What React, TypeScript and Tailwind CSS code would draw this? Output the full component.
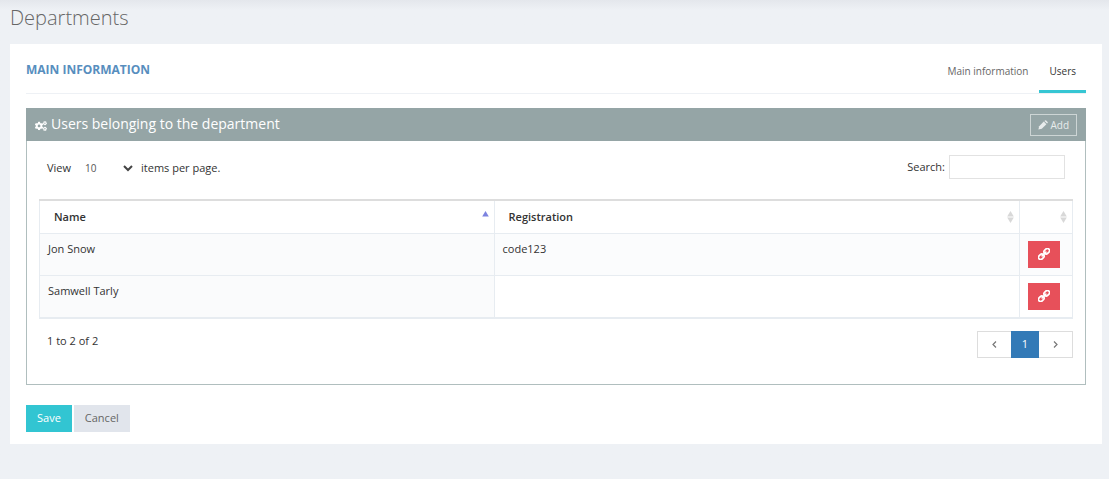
import { useState } from 'react';
import { FaCogs } from 'react-icons/fa';

interface DepartmentUser {
  id: number;
  name: string;
  registration: string;
}

const initialUsers: DepartmentUser[] = [
  { id: 1, name: 'Jon Snow', registration: 'code123' },
  { id: 2, name: 'Samwell Tarly', registration: '' },
];

const tabs = ['Main information', 'Users'];

function SortIcon({ sorted = false }: { sorted?: boolean }) {
  return (
    <svg viewBox="0 0 7 13" className="w-[7px] h-[13px] shrink-0" aria-hidden="true">
      <path d="M3.5 1 L6.8 6.5 H0.2 Z" fill={sorted ? '#7c83e0' : '#d8d8d8'} />
      {!sorted && <path d="M3.5 13 L6.8 7.5 H0.2 Z" fill="#d8d8d8" />}
    </svg>
  );
}

function LinkIcon() {
  return (
    <svg viewBox="0 0 12 12" className="w-3 h-3" fill="none" stroke="currentColor" strokeWidth="1.7" aria-hidden="true">
      <g transform="rotate(-45 6 6)">
        <rect x="-0.9" y="3.8" width="6" height="4.4" rx="2.1" />
        <rect x="6.9" y="3.8" width="6" height="4.4" rx="2.1" />
        <path d="M3.4 6 H8.6" strokeLinecap="round" />
      </g>
    </svg>
  );
}

function PencilIcon() {
  return (
    <svg viewBox="0 0 10 10" className="w-[10px] h-[10px]" fill="currentColor" aria-hidden="true">
      <path d="M0.4 9.6 L1.2 6.2 L5.8 1.6 L8.4 4.2 L3.8 8.8 Z" />
      <path d="M6.4 1 L7.1 0.4 Q7.6 0 8.1 0.4 L9.6 1.9 Q10 2.4 9.6 2.9 L9 3.6 Z" />
    </svg>
  );
}

function Pagination() {
  return (
    <nav className="flex h-[27px] text-[11px] leading-4" aria-label="Pagination">
      <button className="w-[34px] border border-r-0 border-[#dddddd] flex items-center justify-center" aria-label="Previous">
        <svg viewBox="0 0 5 7" className="w-[5px] h-[7px]" fill="none" stroke="#777777" strokeWidth="1.2">
          <path d="M4 0.5 L1 3.5 L4 6.5" />
        </svg>
      </button>
      <button className="w-7 bg-[#337ab7] text-white" aria-current="page">1</button>
      <button className="w-[34px] border border-l-0 border-[#dddddd] flex items-center justify-center" aria-label="Next">
        <svg viewBox="0 0 5 7" className="w-[5px] h-[7px]" fill="none" stroke="#777777" strokeWidth="1.2">
          <path d="M1 0.5 L4 3.5 L1 6.5" />
        </svg>
      </button>
    </nav>
  );
}

export default function App() {
  const [activeTab, setActiveTab] = useState('Users');
  const [pageSize, setPageSize] = useState('10');
  const [search, setSearch] = useState('');

  const users = initialUsers.filter(user =>
    user.name.toLowerCase().includes(search.toLowerCase())
  );

  return (
    <div className="min-h-screen bg-[#eef1f5] bg-linear-to-b from-[#e4e7ec] to-[#eef1f5] to-[10px] pl-[10px] pr-[7px] pb-8 font-['Open_Sans',sans-serif] text-[11px] leading-4 text-[#333333]">
      <h1 className="h-11 pt-1 text-[20px] leading-7 font-light text-[#666666]">Departments</h1>

      <div className="bg-white px-4 pb-3">
        <div className="flex justify-between border-b border-[#eef1f5] h-[50px]">
          <h2 className="pt-[18px] text-[12px] font-bold uppercase text-[#578ebe]">Main information</h2>
          <div className="flex gap-px" role="tablist">
            {tabs.map(tab => (
              <button
                key={tab}
                role="tab"
                aria-selected={activeTab === tab}
                onClick={() => setActiveTab(tab)}
                className={`px-[10px] pt-2 text-[10px] border-b-3 ${
                  activeTab === tab ? 'border-[#36c6d3] text-[#333333]' : 'border-transparent text-[#666666]'
                }`}
              >
                {tab}
              </button>
            ))}
          </div>
        </div>

        <section className="mt-[14px] border border-t-0 border-[#b0bebe]">
          <header className="h-[33px] -mx-px px-[9px] flex items-center justify-between bg-[#95a5a6] text-white">
            <h3 className="flex items-center gap-1 pb-[2px] text-[14px] leading-5">
              <FaCogs className="w-3 h-3 mt-1" />
              Users belonging to the department
            </h3>
            <button className="h-[22px] px-[7px] flex items-center gap-[2px] border border-[#cdd5d5] text-[10px] text-[#e8ecec]">
              <PencilIcon />
              Add
            </button>
          </header>

          <div className="px-3 pt-[14px] pb-[26px]">
            <div className="flex items-center justify-between px-2 pb-5">
              <label className="flex items-center pt-[2px]">
                View
                <span className="relative ml-3 mr-2 flex items-center">
                  <select
                    value={pageSize}
                    onChange={e => setPageSize(e.target.value)}
                    className="w-[50px] pl-[2px] appearance-none bg-transparent text-[10px] text-[#555555]"
                  >
                    <option>10</option>
                    <option>25</option>
                    <option>50</option>
                  </select>
                  <svg viewBox="0 0 10 7" className="absolute right-0 w-[10px] h-[7px] pointer-events-none" fill="none" stroke="#444444" strokeWidth="2">
                    <path d="M1 1 L5 5 L9 1" />
                  </svg>
                </span>
                items per page.
              </label>
              <label className="flex items-center gap-1">
                Search:
                <input
                  type="search"
                  value={search}
                  onChange={e => setSearch(e.target.value)}
                  className="w-[116px] h-6 px-2 border border-[#e2e2e2] outline-none"
                />
              </label>
            </div>

            <table className="w-full table-fixed border-collapse border border-t-2 border-b-2 border-[#e7ecf1] border-t-[#dddddd]">
              <colgroup>
                <col className="w-[44%]" />
                <col />
                <col className="w-[53px]" />
              </colgroup>
              <thead>
                <tr className="h-[33px] text-left text-[#333333]">
                  <th className="pl-[14px] pr-[5px] border border-[#e7ecf1] font-semibold">
                    <div className="flex items-center justify-between">Name <SortIcon sorted /></div>
                  </th>
                  <th className="pl-[14px] pr-[5px] border border-[#e7ecf1] font-semibold">
                    <div className="flex items-center justify-between">Registration <SortIcon /></div>
                  </th>
                  <th className="pr-[5px] border border-[#e7ecf1]" aria-label="Actions">
                    <div className="flex justify-end"><SortIcon /></div>
                  </th>
                </tr>
              </thead>
              <tbody>
                {users.map(user => (
                  <tr key={user.id} className="h-[42px] align-top odd:bg-[#fbfcfd]">
                    <td className="px-2 py-[7px] border border-[#e7ecf1] bg-[#fafbfc]">{user.name}</td>
                    <td className="px-2 py-[7px] border border-[#e7ecf1]">{user.registration}</td>
                    <td className="px-2 py-[7px] border border-[#e7ecf1]">
                      <button className="w-8 h-[27px] flex items-center justify-center bg-[#e7505a] text-white" aria-label="Unlink user">
                        <LinkIcon />
                      </button>
                    </td>
                  </tr>
                ))}
              </tbody>
            </table>

            <div className="mt-3 flex items-start justify-between pl-2">
              <span className="pt-[2px]">1 to {users.length} of {users.length}</span>
              <Pagination />
            </div>
          </div>
        </section>

        <div className="mt-5 flex gap-[2px]">
          <button className="h-[27px] px-[11px] bg-[#32c5d2] text-white">Save</button>
          <button className="h-[27px] px-[11px] bg-[#e1e5ec] text-[#666666]">Cancel</button>
        </div>
      </div>
    </div>
  );
}
